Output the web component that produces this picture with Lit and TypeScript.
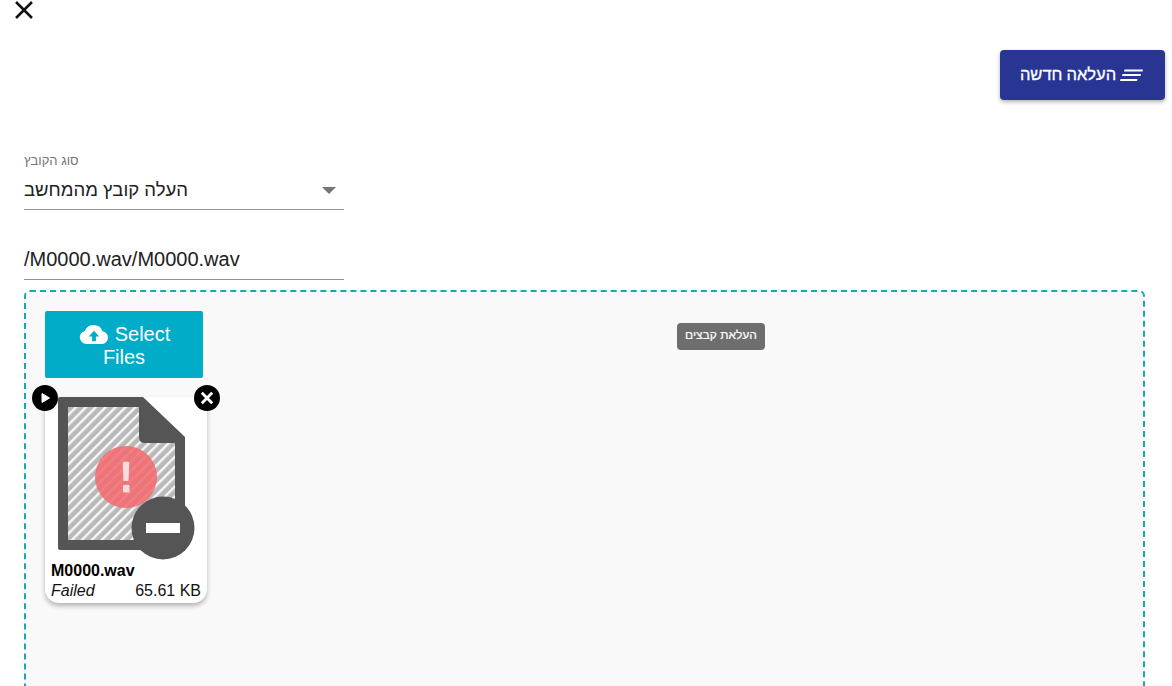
import { LitElement, html, css } from "lit";
import { customElement } from "lit/decorators.js";

@customElement("app-root")
export class AppRoot extends LitElement {
  static styles = css`
    :host { display: block; height: 686px; overflow: hidden; background: #fff; font-family: "Liberation Sans", Arimo, sans-serif; color: #212121; }
    .close { display: block; padding: 0 0 0 14px; height: 22px; }
    .close svg { display: block; }
    .head { display: flex; justify-content: flex-end; padding: 28px 7px 0 0; }
    .new { width: 165px; height: 50px; box-sizing: border-box; display: flex; align-items: center; justify-content: center; gap: 4px; background: #283593; color: #fff; border-radius: 4px; font: 500 16.5px "Roboto", "Liberation Sans", sans-serif; -webkit-text-stroke: .3px #fff; box-shadow: 0 2px 4px rgba(0,0,0,.3); padding: 0 2px 1px 0; }
    .form { padding: 52px 0 0 24px; width: 320px; }
    .label { font-size: 13px; line-height: 16px; color: #757575; padding-top: 1px; margin-bottom: -1px; direction: rtl; text-align: left; }
    .select { height: 42px; border-bottom: 1px solid #949494; display: flex; align-items: center; justify-content: space-between; font-size: 18.5px; padding: 3px 8px 0 0; box-sizing: border-box; }
    .arrow { width: 0; height: 0; border-left: 7px solid transparent; border-right: 7px solid transparent; border-top: 7px solid #757575; }
    .input { margin-top: 28px; height: 42px; box-sizing: border-box; border-bottom: 1px solid #949494; font-size: 20px; line-height: 42px; }
    .zone { position: relative; margin: 10px 27px 0 24px; height: 500px; box-sizing: border-box; border: 2px dashed #17a8b5; border-radius: 6px; background: #f9f9f9; padding: 19px 0 0 19px; }
    .btn { width: 158px; height: 67px; box-sizing: border-box; background: #00acc8; color: #fff; border-radius: 2px; text-align: center; font-size: 20px; line-height: 23px; padding: 12px 25px 0; }
    .btn svg { vertical-align: -3px; margin-right: 5px; }
    .card { position: relative; width: 162px; height: 206px; margin-top: 19px; background: #fff; border-radius: 0 0 14px 14px; box-shadow: 0 3px 5px rgba(0,0,0,.28); }
    .thumb { display: block; }
    .name { font-size: 16px; font-weight: 700; color: #000; padding: 0 6px; line-height: 19px; }
    .meta { display: flex; justify-content: space-between; padding: 1px 6px 0; font-size: 16px; line-height: 20px; color: #111; }
    .meta i { font-style: italic; }
    .badge { position: absolute; top: -12px; width: 26px; height: 26px; }
    .play { left: -13px; }
    .rm { right: -13px; }
    .tip { position: absolute; left: 651px; top: 31px; width: 88px; height: 27px; box-sizing: border-box; background: #6e6e6e; border-radius: 4px; color: #fff; font-size: 12px; line-height: 25px; text-align: center; -webkit-text-stroke: .2px #fff; }
  `;

  render() {
    return html`
      <div class="close">
        <svg width="20" height="20" viewBox="0 0 20 20"><path d="M2 2L18 18M18 2L2 18" stroke="#111" stroke-width="2.5" fill="none"/></svg>
      </div>
      <div class="head">
        <div class="new">
          <span dir="rtl">העלאה חדשה</span>
          <svg width="23" height="16" viewBox="0 0 23 16"><path d="M4.500 2.500H23L22.500 4.500H4ZM2.500 7H21L20.500 9H2ZM.5 12H17.500L17 14H0Z" fill="#fff"/></svg>
        </div>
      </div>
      <div class="form">
        <div class="label">סוג הקובץ</div>
        <div class="select"><span dir="rtl">העלה קובץ מהמחשב</span><span class="arrow"></span></div>
        <div class="input">/M0000.wav/M0000.wav</div>
      </div>
      <div class="zone">
        <div class="btn">
          <svg width="32" height="19" viewBox="0 0 32 20"><path fill="#fff" d="M8 20a7 7 0 0 1-1.600-13.800A10 10 0 0 1 25 6.500 6.800 6.800 0 0 1 24.500 20Z"/><path fill="#00acc8" d="M16 6l-5.500 6H14v5h4v-5h3.500Z"/></svg>Select Files
        </div>
        <div class="card">
          <svg class="thumb" width="162" height="164" viewBox="0 0 162 164">
            <defs>
              <pattern id="st" width="7" height="7" patternUnits="userSpaceOnUse" patternTransform="rotate(45)">
                <rect width="7" height="7" fill="#b9b9b9"/><rect width="2.400" height="7" fill="#f6f6f6"/>
              </pattern>
            </defs>
            <path fill="#555" d="M13 2Q13 0 15 0H98L140 40V153H15Q13 153 13 151Z"/>
            <path fill="url(#st)" d="M23 10H94V40Q94 46 100 46H130V143H23Z"/>
            <circle cx="81" cy="80" r="31" fill="#f46a6e"/>
            <circle cx="81" cy="80" r="31" fill="url(#st)" opacity=".14"/>
            <path d="M77.700 66Q77.700 64.700 79 64.700H83Q84.300 64.700 84.300 66L83.500 84H78.500Z" fill="#f7dcdc"/>
            <rect x="78" y="88" width="6.500" height="7.500" rx="1" fill="#f7dcdc"/>
            <circle cx="118" cy="131" r="31.500" fill="#555"/>
            <rect x="101" y="126" width="34" height="10" fill="#fff"/>
          </svg>
          <div class="name">M0000.wav</div>
          <div class="meta"><i>Failed</i><span>65.61 KB</span></div>
          <svg class="badge play" viewBox="0 0 26 26"><circle cx="13" cy="13" r="13" fill="#000"/><path d="M10 8.500L17.500 13 10 17.500Z" fill="#fff" stroke="#fff" stroke-linejoin="round"/></svg>
          <svg class="badge rm" viewBox="0 0 26 26"><circle cx="13" cy="13" r="13" fill="#000"/><path d="M7.800 7.800L18.200 18.200M18.200 7.800L7.800 18.200" stroke="#fff" stroke-width="2.800"/></svg>
        </div>
        <div class="tip" dir="rtl">העלאת קבצים</div>
      </div>
    `;
  }
}
